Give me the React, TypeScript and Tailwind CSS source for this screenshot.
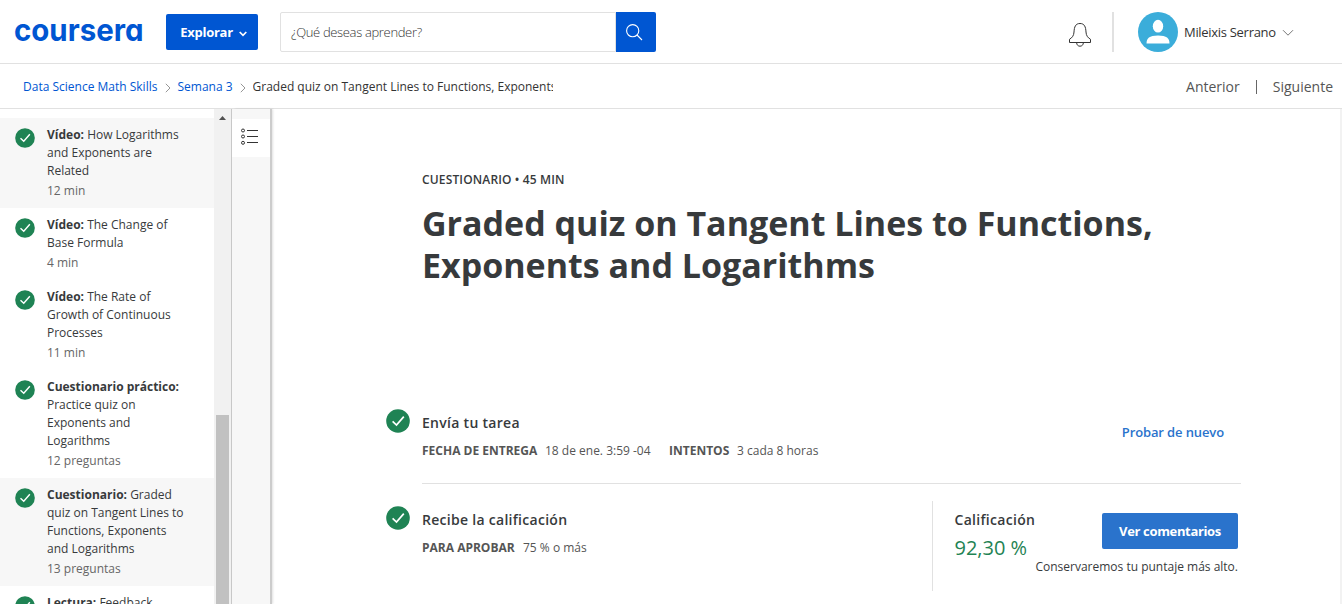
import React from "react";

type Item = { kind: string; lines: string[]; meta: string; shaded?: boolean };

const items: Item[] = [
  { kind: "Vídeo:", lines: ["How Logarithms", "and Exponents are", "Related"], meta: "12 min", shaded: true },
  { kind: "Vídeo:", lines: ["The Change of", "Base Formula"], meta: "4 min" },
  { kind: "Vídeo:", lines: ["The Rate of", "Growth of Continuous", "Processes"], meta: "11 min" },
  { kind: "Cuestionario práctico:", lines: ["", "Practice quiz on", "Exponents and", "Logarithms"], meta: "12 preguntas" },
  { kind: "Cuestionario:", lines: ["Graded", "quiz on Tangent Lines to", "Functions, Exponents", "and Logarithms"], meta: "13 preguntas", shaded: true },
  { kind: "Lectura:", lines: ["Feedback"], meta: "10 min" },
];

function Check({ className }: { className: string }) {
  return (
    <svg viewBox="0 0 24 24" className={className} fill="none">
      <circle cx="12" cy="12" r="11.8" fill="#1f8354" />
      <path d="M6.6 12.3 10.5 16 17.8 7.6" stroke="#fff" strokeWidth="1.7" />
    </svg>
  );
}

function Crumb() {
  return (
    <svg viewBox="0 0 6 10" className="mt-0.5 h-2.5 w-1.5 shrink-0" fill="none" stroke="#8a8a8a" strokeWidth="0.9">
      <path d="M0.8 0.8 5 5 0.8 9.2" />
    </svg>
  );
}

function Header() {
  return (
    <header className="flex h-16 shrink-0 items-center border-b border-[#e1e1e1]">
      <div className="ml-3.5 flex h-16 w-[152px] items-center">
        <svg width="132" height="48" viewBox="0 0 132 48" role="img" aria-label="coursera" className="overflow-visible">
          <text x="0" y="32.800" textLength="129.500" lengthAdjust="spacingAndGlyphs" fill="#0056d2" className="[font-family:Inter,sans-serif] text-[31px] font-bold [font-feature-settings:'cv11']">coursera</text>
        </svg>
      </div>
      <button className="flex h-9 w-[92px] items-center rounded-[2px] bg-[#0056d2] pl-3.5 pt-0.5 text-[13px] font-bold text-white">
        <span className="w-[53px] whitespace-nowrap tracking-[-0.25px]">Explorar</span>
        <svg viewBox="0 0 8 6" className="ml-1.5 mt-0.5 h-1.5 w-2" fill="none" stroke="#fff" strokeWidth="1.7">
          <path d="M0.7 1 4 4.3 7.3 1" />
        </svg>
      </button>
      <div className="ml-[22px] flex h-10">
        <div className="flex w-[336px] items-center rounded-l-[2px] border border-[#e1e1e1] pl-2.5 pt-0.5 text-[13px] font-light tracking-[-0.34px] text-[#333]">¿Qué deseas aprender?</div>
        <div className="flex w-10 items-center justify-center rounded-r-[2px] bg-[#0056d2]">
          <svg viewBox="0 0 18 18" className="-ml-1 h-[18px] w-[18px]" fill="none" stroke="#fff" strokeWidth="1.1">
            <circle cx="7.7" cy="7.7" r="6.1" />
            <path d="m12 12 5 5" />
          </svg>
        </div>
      </div>
      <div className="ml-auto flex items-center pr-12">
        <svg viewBox="0 0 24 26" className="mt-1 h-[26px] w-6" fill="none" stroke="#333" strokeWidth="1">
          <path d="M1.500 21.500h21v-3.200c-2.900-1.800-4.300-3.700-4.500-7.300C17.700 5.800 16.500 2.500 12 2.500S6.300 5.800 6 11c-.2 3.600-1.600 5.500-4.500 7.300v3.200Z" />
          <path d="M8.600 21.700c.2 2.300 1.500 3.500 3.400 3.500s3.200-1.200 3.400-3.500" />
        </svg>
        <div className="ml-5 h-10 w-0.5 bg-[#e1e1e1]" />
        <svg viewBox="0 0 40 40" className="ml-6 h-10 w-10">
          <circle cx="20" cy="20" r="20" fill="#3badda" />
          <ellipse cx="20" cy="14.200" rx="5.200" ry="6.400" fill="#fff" />
          <path d="M8.500 31.500c0-5.200 2.700-8 11.500-8s11.500 2.800 11.500 8Z" fill="#fff" />
        </svg>
        <span className="ml-1.5 w-[92px] whitespace-nowrap pt-0.5 text-[13px] tracking-[-0.3px] text-[#333]">Mileixis Serrano</span>
        <svg viewBox="0 0 12 8" className="ml-1.5 mt-0.5 h-2 w-3" fill="none" stroke="#777" strokeWidth="1">
          <path d="M1 1.200 6 6.200 11 1.200" />
        </svg>
      </div>
    </header>
  );
}

function Sidebar() {
  return (
    <aside className="flex w-[232px] shrink-0 border-r border-[#c8c8c8]">
      <div className="w-[214px] shrink-0 overflow-hidden pt-[9px]">
        {items.map((item, i) => (
          <div key={i} className={item.shaded ? "flex bg-[#f7f7f7] py-2 pl-[15px]" : "flex py-2 pl-[15px]"}>
            <Check className="mt-0.5 h-5 w-5 shrink-0" />
            <div className="ml-3 whitespace-nowrap text-[12px] leading-[18px] text-[#373a3c]">
              {item.lines.map((line, j) => (
                <div key={j}>
                  {j === 0 && <b className="font-bold">{item.kind}</b>} {line}
                </div>
              ))}
              <div className="mt-0.5 text-[#666]">{item.meta}</div>
            </div>
          </div>
        ))}
      </div>
      <div className="flex w-[17px] flex-col items-center bg-[#f1f1f1] pt-[7px]">
        <svg viewBox="0 0 7 4" className="h-1 w-[7px] shrink-0">
          <path d="M0 4 3.500 0 7 4Z" fill="#505050" />
        </svg>
        <div className="mt-[295px] w-[13px] grow bg-[#c1c1c1]" />
      </div>
    </aside>
  );
}

function Rail() {
  return (
    <div className="z-10 w-[38px] shrink-0 bg-[#f7f7f7] pt-2.5 shadow-[2px_0_0_#cccccc,3px_0_2px_rgba(0,0,0,0.12)]">
      <div className="h-[38px] bg-white pl-[9px] pt-[9px]">
        <svg viewBox="0 0 18 18" className="h-[18px] w-[18px]" fill="none" stroke="#333">
          <circle cx="2" cy="2.500" r="1.500" />
          <circle cx="2" cy="8.500" r="1.500" />
          <circle cx="2" cy="14.800" r="1.500" />
          <path d="M6 2.500h11M6 8.500h11M6 14.500h11" />
        </svg>
      </div>
    </div>
  );
}

function Main() {
  return (
    <main className="flex min-w-0 grow flex-col border-r-2 border-[#f2f2f2] pl-[116px] text-[#373a3c]">
      <div className="ml-9 mt-[62px] text-[12px] font-semibold leading-[18px] tracking-[0.15px]">CUESTIONARIO • 45 MIN</div>
      <h1 className="ml-9 mt-[13px] whitespace-nowrap text-[34px] font-bold leading-[42px]">
        Graded quiz on Tangent Lines to Functions,
        <br />
        Exponents and Logarithms
      </h1>
      <section className="mt-[123px] flex">
        <Check className="h-6 w-6 shrink-0" />
        <div className="ml-3 flex h-[75px] w-[819px] justify-between border-b border-[#e1e1e1]">
          <div className="pt-1 text-[14px] font-semibold leading-5">
            <h2 className="tracking-[0.29px]">Envía tu tarea</h2>
            <div className="mt-[9px] flex whitespace-nowrap text-[12px] leading-[18px] text-[#555]">
              <b className="w-[123px] font-bold">FECHA DE ENTREGA</b>
              <span className="w-[124px] font-normal">18 de ene. 3:59 -04</span>
              <b className="w-[68px] font-bold">INTENTOS</b>
              <span className="font-normal">3 cada 8 horas</span>
            </div>
          </div>
          <a className="mr-[17px] mt-[13px] text-[13px] font-semibold leading-5 tracking-[-0.12px] text-[#2a73cc]">Probar de nuevo</a>
        </div>
      </section>
      <section className="mt-[17px] flex">
        <Check className="mt-[5px] h-6 w-6 shrink-0" />
        <div className="ml-3 w-[510px] pt-[9px] text-[14px] font-semibold leading-5">
          <h2 className="tracking-[0.28px]">Recibe la calificación</h2>
          <div className="mt-[9px] flex whitespace-nowrap text-[12px] leading-[18px] text-[#555]">
            <b className="w-[101px] font-bold">PARA APROBAR</b>
            <span className="font-normal">75 % o más</span>
          </div>
        </div>
        <div className="flex h-[90px] w-[306px] justify-between border-l border-[#e1e1e1] pl-[21.500px]">
          <div className="w-20 shrink-0 whitespace-nowrap pt-[9px]">
            <div className="text-[14px] font-semibold leading-5 tracking-[0.3px]">Calificación</div>
            <div className="mt-1 text-[20px] leading-[28px] text-[#1f8354]">92,30 %</div>
          </div>
          <div className="flex w-[203px] shrink-0 flex-col items-end pt-3">
            <button className="h-9 w-[136px] rounded-[2px] bg-[#2a73cc] pt-0.5 text-[13px] font-bold tracking-[-0.34px] text-white">Ver comentarios</button>
            <div className="mt-[9px] whitespace-nowrap text-[12px] leading-[18px]">Conservaremos tu puntaje más alto.</div>
          </div>
        </div>
      </section>
    </main>
  );
}

export default function App() {
  return (
    <div className="flex h-[604px] w-[1342px] flex-col overflow-hidden bg-white [font-family:'Open_Sans',sans-serif]">
      <Header />
      <nav className="flex h-[45px] shrink-0 items-center border-b border-[#e1e1e1] pl-[23px] pt-px text-[12px] text-[#0056d2]">
        <span className="w-[142px] whitespace-nowrap">Data Science Math Skills</span>
        <Crumb />
        <span className="ml-[6.500px] w-[62px] whitespace-nowrap">Semana 3</span>
        <Crumb />
        <span className="ml-[7px] w-[300px] overflow-hidden whitespace-nowrap text-[#333]">Graded quiz on Tangent Lines to Functions, Exponents and Logarithms</span>
        <div className="-mt-px ml-auto flex items-center pr-[9px] text-[14px] text-[#555]">
          <span>Anterior</span>
          <div className="mx-4 mt-0.5 h-3.5 w-px bg-[#666]" />
          <span>Siguiente</span>
        </div>
      </nav>
      <div className="flex min-h-0 grow">
        <Sidebar />
        <Rail />
        <Main />
      </div>
    </div>
  );
}
